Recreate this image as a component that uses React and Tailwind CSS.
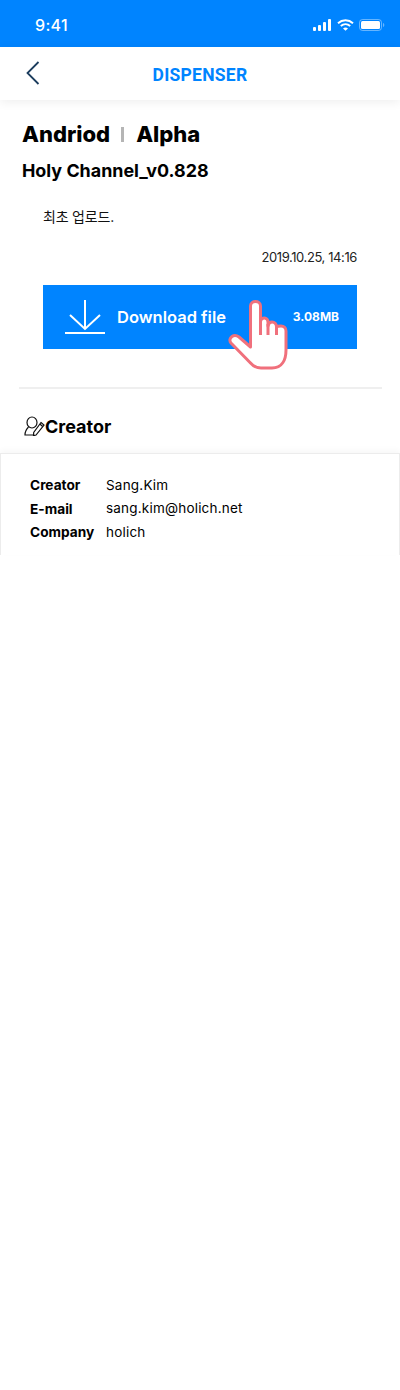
const FONT = "font-['Inter','Noto_Sans_CJK_KR',sans-serif]";

// Cellular, wifi and battery glyphs from the status bar
function StatusIcons() {
  return (
    <div className="flex items-center gap-[5px]">
      <svg width="19" height="12" viewBox="0 0 19 12" fill="white">
        <rect x="0" y="8" width="3" height="4" rx="1" />
        <rect x="5" y="6" width="3" height="6" rx="1" />
        <rect x="10" y="3" width="3" height="9" rx="1" />
        <rect x="15" y="0" width="3" height="12" rx="1" />
      </svg>
      <svg width="17" height="12" viewBox="0 0 17 12" fill="none" stroke="white" strokeWidth="2">
        <path d="M1 4.2C5.3 .4 11.7 .4 16 4.2" />
        <path d="M3.8 7C6.5 4.8 10.5 4.8 13.2 7" />
        <path d="M8.5 11.8L6 9.4C7.5 8.3 9.5 8.3 11 9.4Z" fill="white" stroke="none" />
      </svg>
      <svg width="26" height="12" viewBox="0 0 26 12">
        <rect x="0.5" y="0.5" width="22" height="11" rx="3" fill="none" stroke="white" strokeOpacity="0.4" />
        <rect x="2" y="2" width="19" height="8" rx="1.5" fill="white" />
        <path d="M24 4v4c.8-.3 1.3-1.1 1.3-2s-.5-1.700-1.300-2z" fill="white" fillOpacity="0.4" />
      </svg>
    </div>
  );
}

function BackIcon() {
  return (
    <svg className="absolute left-[26px] top-[14px]" width="14" height="24" viewBox="0 0 14 24" fill="none" stroke="#1c3d5e" strokeWidth="1.800">
      <path d="M12.500 1L1.500 12L12.500 23" />
    </svg>
  );
}

function DownloadIcon() {
  return (
    <svg width="40" height="36" viewBox="0 0 40 36" fill="none" stroke="white" strokeWidth="2">
      <path d="M20 1V29" />
      <path d="M5 16L20 30L35 16" />
      <path d="M0 34H40" />
    </svg>
  );
}

function HandIcon() {
  return (
    <svg
      className="absolute left-[228px] top-[300px]"
      width="62"
      height="71"
      viewBox="0 0 62 71"
      fill="white"
      stroke="#f0707c"
      strokeWidth="3"
      strokeLinejoin="round"
    >
      <path d="M22.500 6C22.500 3 25 1.500 27.500 1.500C30 1.500 32.500 3 32.500 6V22C32.500 19.500 34.500 18 36.500 18C38.500 18 40 20 40 22V26C40.500 23.500 42 22 44 22C46.500 22 48.500 24 48.500 27C49.500 26 51 26 53 26C56 26 58 28 58 31V50C58 60 54 68 44 68H33C28 68 25 66 22 62.500L3 43C1 40.500 2 38 4 36.500C6 35 9 35.500 11 37L22.500 47Z" />
      <path d="M32.500 22V35M40 24V35M48.500 27V35" fill="none" />
    </svg>
  );
}

function CreatorIcon() {
  return (
    <svg width="21" height="20" viewBox="0 0 21 20" fill="none" stroke="#111" strokeWidth="1.200">
      <ellipse cx="8" cy="6.500" rx="5" ry="5.500" />
      <path d="M4.500 11C2.500 13 1 15.500 1 19H9" />
      <path d="M17 6.500L20 9L12 19L9.500 19.700L9.700 16.500Z" />
      <path d="M15.800 8L18.700 10.500" />
    </svg>
  );
}

function InfoRow({ label, value }) {
  return (
    <div className="flex h-[23.500px] items-center">
      <span className="w-[76px] text-[13.700px] font-bold text-black">{label}</span>
      <span className="-mt-[2px] text-[13.500px] tracking-[0.2px] text-black">{value}</span>
    </div>
  );
}

export default function App() {
  return (
    <div className={`relative h-[1390px] w-[400px] overflow-hidden bg-white ${FONT}`}>
      {/* Status bar */}
      <div className="flex h-[47px] items-center justify-between bg-[#0084ff] pl-[35px] pr-[15px] pt-[2px]">
        <span className="text-[16px] font-medium tracking-[0.3px] text-white">9:41</span>
        <StatusIcons />
      </div>

      {/* Nav */}
      <div className="relative flex h-[53px] items-center justify-center bg-white pt-[3px] shadow-[0_2px_10px_rgba(0,0,0,0.07)]">
        <BackIcon />
        <span className="font-['Roboto',sans-serif] text-[17.500px] font-bold tracking-[0.25px] text-[#0084ff]">
          DISPENSER
        </span>
      </div>

      {/* Title block */}
      <div className="px-[22px] pt-[20px]">
        <div className="flex h-[28px] items-center text-[22px] font-extrabold text-black">
          <span>Andriod</span>
          <span className="ml-[11px] mr-[12px] h-[15px] w-[3px] bg-[#b5b5b5]" />
          <span>Alpha</span>
        </div>
        <div className="mt-[11px] text-[17.900px] font-bold leading-[24px] text-black">Holy Channel_v0.828</div>
        <p className="ml-[21px] mt-[24px] text-[14px] leading-[20px] tracking-[-0.2px] text-[#111]">최초 업로드.</p>
        <div className="mt-[20px] pr-[21px] text-right text-[13px] leading-[20px] tracking-[-0.4px] text-[#222]">2019.10.25, 14:16</div>
      </div>

      {/* Download button */}
      <div className="mx-[43px] mt-[18px] flex h-[64px] items-center bg-[#0084ff] pl-[22px] pr-[18px]">
        <DownloadIcon />
        <span className="ml-[12px] flex-1 text-[16.500px] font-semibold text-white">Download file</span>
        <span className="text-[12px] font-bold text-white">3.08MB</span>
      </div>
      <HandIcon />

      <div className="ml-[19px] mr-[18px] mt-[38px] h-[2px] bg-[#efefef]" />

      {/* Creator */}
      <div className="ml-[24px] mt-[26px] flex h-[22px] items-center">
        <CreatorIcon />
        <span className="text-[18px] font-bold text-black">Creator</span>
      </div>

      <div className="mt-[16px] h-[102px] border-x border-t border-[#ececec] pl-[29px] pt-[20px] shadow-[0_-3px_6px_rgba(0,0,0,0.03)]">
        <InfoRow label="Creator" value="Sang.Kim" />
        <InfoRow label="E-mail" value="sang.kim@holich.net" />
        <InfoRow label="Company" value="holich" />
      </div>
    </div>
  );
}
